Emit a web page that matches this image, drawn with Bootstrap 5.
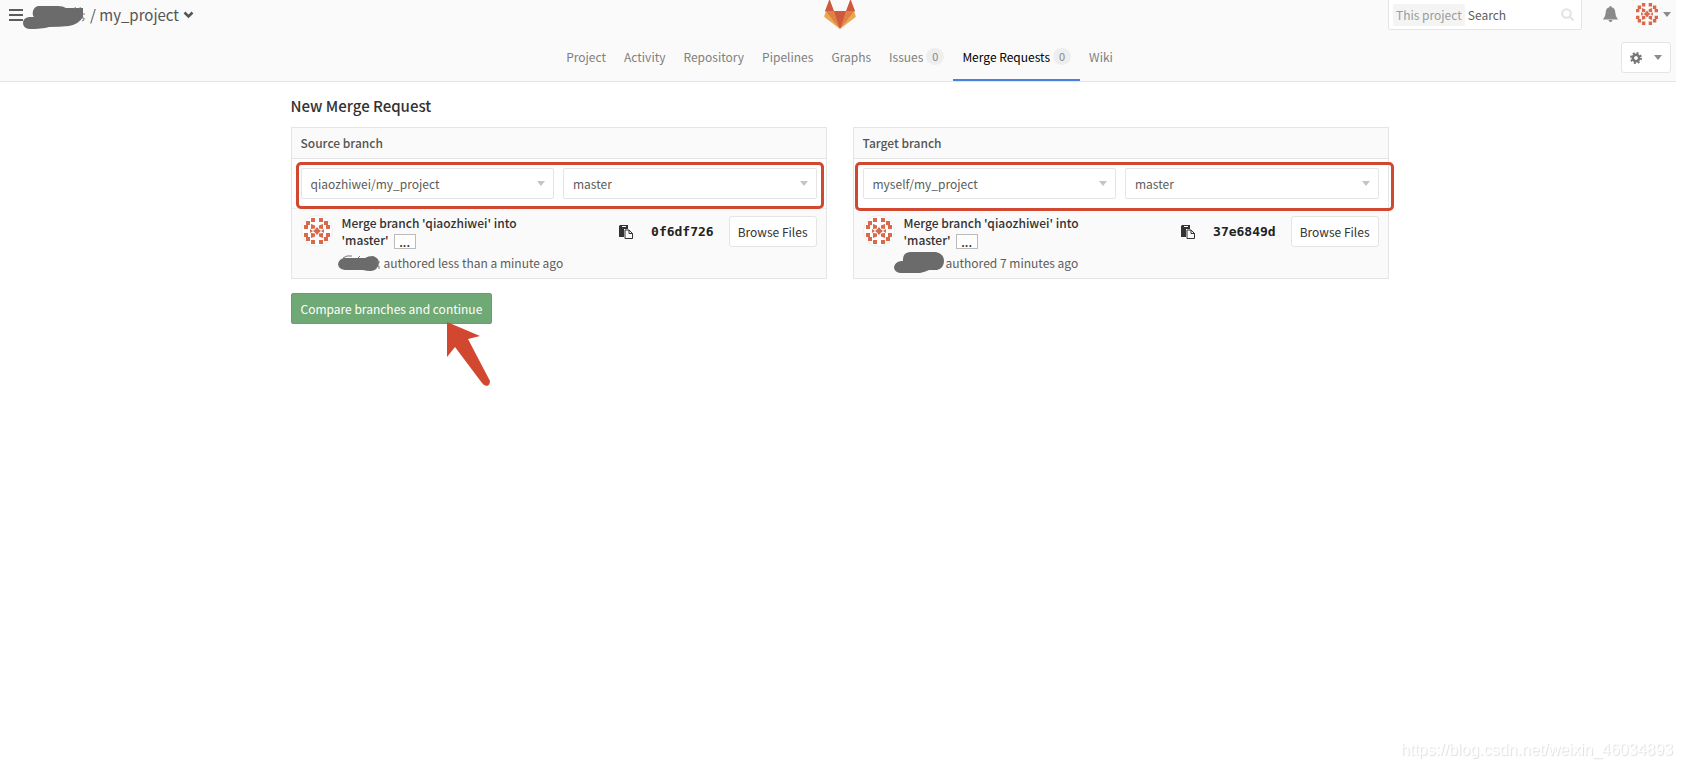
<!DOCTYPE html>
<html lang="en">
<head>
<meta charset="utf-8">
<meta name="viewport" content="width=device-width, initial-scale=1">
<title>New Merge Request · my_project</title>
<link href="https://cdn.jsdelivr.net/npm/bootstrap@5.3.0/dist/css/bootstrap.min.css" rel="stylesheet">
<style>
  body { font-family: "Noto Sans CJK SC", "Noto Sans", sans-serif; font-size: 12px; line-height: 17px; color: #5c5c5c; background: #fff; }
  a { color: inherit; text-decoration: none; }
  svg { display: block; flex: none; }
  .site-header { background: #fafafa; border-bottom: 1px solid #e5e5e5; margin-right: 6px; padding-left: 3px; }
  .top-bar { height: 34px; }
  .top-side { flex: 1 1 0; }
  .project-title { font-size: 15px; line-height: 28px; color: #555; }
  .burger { width: 14px; height: 12px; margin-left: 6px; border: 0; padding: 0; background: repeating-linear-gradient(#5c5c5c 0 2px, transparent 2px 5px); }
  .search-box { width: 194px; height: 31px; margin-top: -1px; gap: 3px; border: 1px solid #e5e5e5; background: #fff; border-radius: 0 0 2px 2px; padding-left: 4px; padding-right: 7px; }
  .search-scope { background: #f4f4f4; color: #9b9b9b; border-radius: 2px; line-height: 22px; padding: 0 3px; white-space: nowrap; }
  .search-box input { border: 0; padding: 0; min-width: 0; color: #555; outline: 0; }
  .search-box input::placeholder { color: #5c5c5c; opacity: 1; }
  .bell { margin: 6px 18px 0 21px; }
  .user { gap: 5px; margin: 3px 5px 0 0; }
  .caret { width: 0; height: 0; border: 4px solid transparent; border-top: 5px solid #8c8c8c; border-bottom: 0; }
  .caret-light { border-top-color: #c4c4c4; }
  .plain-btn { border: 0; background: none; padding: 0; }
  .sub-bar { height: 47px; }
  .tab-link { display: flex; align-items: center; gap: 3px; height: 47px; padding: 0 9px; color: #7f7f7f; border-bottom: 2px solid transparent; }
  .tab-link.current { color: #000; border-bottom-color: #4a80e0; }
  .count { background: #eee; color: #888; border-radius: 9px; width: 18px; text-align: center; font-size: 11px; }
  .box-btn { background: #fff; border: 1px solid #e5e5e5; border-radius: 3px; color: #333; height: 31px; padding: 0 8px; white-space: nowrap; }
  .settings { width: 50px; margin: 8px 5px 0 0; }
  .page-wrap { padding-right: 3px; }
  .page { max-width: 1098px; }
  .page-title { font-size: 15px; line-height: 20px; font-weight: 500; color: #333; margin: 14px 0 11px; }
  .branches { display: grid; grid-template-columns: 1fr 1fr; gap: 26px; }
  .panel { border: 1px solid #e5e5e5; background: #fff; }
  .panel-head { background: #fafafa; border-bottom: 1px solid #e5e5e5; height: 31px; padding: 0 9px; font-size: 12px; font-weight: 500; color: #555; }
  .panel-pick { padding: 9px; position: relative; display: grid; grid-template-columns: 1fr 1fr; gap: 9px; }
  .pick { background: #fff; border: 1px solid #e5e5e5; border-radius: 2px; height: 31px; padding: 0 8px 0 9px; color: #5c5c5c; }
  .outline { position: absolute; border: 3px solid #d1472f; border-radius: 5px; pointer-events: none; }
  .outline-source { inset: 3px 2px -1px 4px; }
  .outline-target { inset: 3px -6px -3px 1px; }
  .commit { background: #fafafa; border-top: 1px solid #ececec; padding: 5px 9px 4px; min-height: 70px; gap: 9px; }
  .commit-avatar { border-radius: 50%; background: #fff; border: 1px solid #eee; margin-top: 1px; }
  .commit-title { color: #333; font-weight: 500; width: 190px; margin-bottom: 5px; }
  .more-btn { border: 1px solid #bbb; background: #fff; color: #333; height: 15px; width: 22px; line-height: 10px; padding: 0; font-weight: 500; margin-left: 5px; vertical-align: middle; }
  .commit-actions { margin-top: 2px; }
  .scribble { margin: -2px 4px -2px -4px; }
  .scribble-wide { margin: -2px 2px -2px -10px; }
  .copy-btn { margin-right: 18px; }
  .sha { font: bold 13px/17px "DejaVu Sans Mono", monospace; color: #222; margin-right: 15px; }
  .action-row { position: relative; margin-top: 14px; min-height: 100px; }
  .compare-btn { background: #6fa975; border: 1px solid #65a06b; color: #fff; border-radius: 2px; height: 31px; padding: 0 9px; }
  .pointer { position: absolute; left: 156px; top: 29px; }
  .watermark { position: fixed; right: 9px; bottom: 8px; font: 16px/20px "Liberation Sans", sans-serif; color: #fff; text-shadow: 1px 1px 1px #ddd; }
</style>
</head>
<body class="min-vh-100">
<svg width="0" height="0" class="position-absolute" aria-hidden="true">
  <symbol id="identicon" viewBox="0 0 30 30">
    <g fill="#d9694a">
      <path d="M9 2h4v4H9zM17 2h4v4h-4zM9 24h4v4H9zM17 24h4v4h-4zM2 9h4v4H2zM2 17h4v4H2zM24 9h4v4h-4zM24 17h4v4h-4zM4 5h4v4H4zM22 5h4v4h-4zM4 21h4v4H4zM22 21h4v4h-4z"/>
      <path d="M15 11l2 2.500 2 1.500-2 1.500-2 2.500-2-2.500-2-1.500 2-1.500zM9 8l4 1.500v3L9 13zM21 8l-4 1.500v3l4 .5zM9 22l4-1.500v-3L9 17zM21 22l-4-1.500v-3l4-.5zM8 13l3 2-3 2zM22 13l-3 2 3 2z"/>
    </g>
  </symbol>
  <symbol id="paste" viewBox="0 0 14 14">
    <path fill="#333" d="M1 0h8v4H5v8H0V1z"/><path fill="#fafafa" d="M3 1h4v1H3z"/>
    <path fill="#fafafa" stroke="#333" d="M6 5h4l3.500 3.500v5H6z"/><path fill="none" stroke="#333" d="M10 5v3.500h3.500"/>
  </symbol>
</svg>

<header class="site-header">
  <div class="top-bar d-flex align-items-start">
    <div class="top-side d-flex align-items-center">
      <button class="burger" aria-label="Menu"></button>
      <a href="#" class="project-title d-flex align-items-center">
        <svg width="63" height="30" viewBox="23 0 63 30" aria-hidden="true"><path fill="#6b6b6b" d="M38 6h20q5 0 8 2h17v9q-4 7-14 9-10 1-20 1-7 2-20 2-6-1-6-6 0-5 6-6h5q-2-2-1-6 1-4 5-5z"/><path d="M74 9l1.500-2M79 9l1.500-2M80 14h5M80 18h4v2l-2 1" fill="none" stroke="#777"/></svg>
        <span class="ms-1">/ my_project</span>
        <svg class="ms-1" width="11" height="8" viewBox="0 0 11 8"><path d="M1.500 1.500l4 4 4-4" fill="none" stroke="#555" stroke-width="2.500"/></svg>
      </a>
    </div>
    <a href="#" aria-label="Home">
      <svg width="32" height="29" viewBox="0 1 32 29"><path fill="#cd5a3c" d="M16 30L1 12 5.500 0l4.500 12h12L26.500 0 31 12z"/><path fill="#e07f47" d="M16 30L10 12H2zM16 30l6-18h8z"/><path fill="#e9a850" d="M16 30L2 12 .3 17q-.3 1 .7 1.500zM16 30l14-18 1.700 5q.3 1-.7 1.500z"/></svg>
    </a>
    <div class="top-side d-flex align-items-start justify-content-end">
      <form class="search-box d-flex align-items-center">
        <span class="search-scope">This project</span>
        <input class="flex-fill" type="text" placeholder="Search" aria-label="Search">
        <svg width="13" height="13" viewBox="0 0 13 13" fill="none" stroke="#dfe2e8" stroke-width="2"><circle cx="5.500" cy="5.500" r="4.300"/><path d="M9 9l3.500 3.500"/></svg>
      </form>
      <button class="plain-btn bell" aria-label="Notifications"><svg width="15" height="16" viewBox="0 0 15 16" fill="#8a8a8a"><path d="M7.500 0q1 0 1 1.300Q12 2 12.200 6q.2 5 2.800 7.500H0Q2.600 11 2.800 6 3 2 6.500 1.300 6.500 0 7.500 0zM5.500 14h4q-.2 2-2 2t-2-2z"/></svg></button>
      <button class="plain-btn d-flex align-items-center user" aria-label="Account"><svg width="22" height="22" viewBox="2 2 26 26"><use href="#identicon" width="30" height="30"/></svg><span class="caret"></span></button>
    </div>
  </div>
  <div class="sub-bar d-flex">
    <div class="top-side"></div>
    <nav class="d-flex" aria-label="Project">
      <a class="tab-link" href="#">Project</a>
      <a class="tab-link" href="#">Activity</a>
      <a class="tab-link" href="#">Repository</a>
      <a class="tab-link" href="#">Pipelines</a>
      <a class="tab-link" href="#">Graphs</a>
      <a class="tab-link" href="#">Issues <span class="count">0</span></a>
      <a class="tab-link current" href="#">Merge Requests <span class="count">0</span></a>
      <a class="tab-link" href="#">Wiki</a>
    </nav>
    <div class="top-side d-flex align-items-start justify-content-end">
      <button class="box-btn d-flex align-items-center justify-content-between settings" aria-label="Settings"><svg width="12" height="12" viewBox="-6 -6 12 12"><circle r="3.200" fill="none" stroke="#777" stroke-width="2.600"/><circle r="5.100" fill="none" stroke="#777" stroke-width="1.800" stroke-dasharray="2 2.005"/></svg><span class="caret"></span></button>
    </div>
  </div>
</header>

<div class="page-wrap">
<main class="page mx-auto">
  <h1 class="page-title">New Merge Request</h1>
  <div class="branches">
    <section class="panel">
      <h2 class="panel-head d-flex align-items-center m-0">Source branch</h2>
      <div class="panel-pick">
        <button class="pick d-flex align-items-center justify-content-between">qiaozhiwei/my_project <span class="caret caret-light"></span></button>
        <button class="pick d-flex align-items-center justify-content-between">master <span class="caret caret-light"></span></button>
        <div class="outline outline-source"></div>
      </div>
      <div class="commit d-flex">
        <svg class="commit-avatar" width="32" height="32"><use href="#identicon"/></svg>
        <div class="flex-fill">
          <div class="commit-title"><a href="#">Merge branch 'qiaozhiwei' into 'master'</a><button class="more-btn" aria-label="Show more">...</button></div>
          <div class="d-flex align-items-center"><svg class="scribble" width="42" height="18" viewBox="0 0 42 18" aria-hidden="true"><path fill="#6b6b6b" d="M6 4h21q3-2 8-2 6 2 6 7-1 7-8 8-5 0-8-1H7q-7-1-7-6 1-5 6-6z"/><path d="M5 4l4-2h5M20 4l2-2M38 8h4M38 12h3v3" fill="none" stroke="#777"/></svg><span>authored less than a minute ago</span></div>
        </div>
        <div class="commit-actions d-flex align-items-center align-self-start">
          <button class="plain-btn copy-btn" aria-label="Copy commit SHA"><svg width="14" height="14"><use href="#paste"/></svg></button>
          <a href="#" class="sha">0f6df726</a>
          <button class="box-btn">Browse Files</button>
        </div>
      </div>
    </section>
    <section class="panel">
      <h2 class="panel-head d-flex align-items-center m-0">Target branch</h2>
      <div class="panel-pick">
        <button class="pick d-flex align-items-center justify-content-between">myself/my_project <span class="caret caret-light"></span></button>
        <button class="pick d-flex align-items-center justify-content-between">master <span class="caret caret-light"></span></button>
        <div class="outline outline-target"></div>
      </div>
      <div class="commit d-flex">
        <svg class="commit-avatar" width="32" height="32"><use href="#identicon"/></svg>
        <div class="flex-fill">
          <div class="commit-title"><a href="#">Merge branch 'qiaozhiwei' into 'master'</a><button class="more-btn" aria-label="Show more">...</button></div>
          <div class="d-flex align-items-center"><svg class="scribble-wide" width="50" height="21" viewBox="0 0 50 21" aria-hidden="true"><path fill="#6b6b6b" d="M16 0h26q8 2 8 9t-7 9h-8q-4 2-9 3H6q-6-1-6-6 1-5 7-6h2q-1-8 7-9z"/></svg><span>authored 7 minutes ago</span></div>
        </div>
        <div class="commit-actions d-flex align-items-center align-self-start">
          <button class="plain-btn copy-btn" aria-label="Copy commit SHA"><svg width="14" height="14"><use href="#paste"/></svg></button>
          <a href="#" class="sha">37e6849d</a>
          <button class="box-btn">Browse Files</button>
        </div>
      </div>
    </section>
  </div>
  <div class="action-row">
    <button class="compare-btn">Compare branches and continue</button>
    <svg class="pointer" width="44" height="64" viewBox="0 0 44 64" aria-hidden="true"><path fill="#d1472f" d="M0 0L33 14L21 17L43 59Q43 63 40 64Q37 64 35 61L8 25L0 35Z"/></svg>
  </div>
</main>
</div>
<div class="watermark">https://blog.csdn.net/weixin_46034893</div>
<script src="https://cdn.jsdelivr.net/npm/bootstrap@5.3.0/dist/js/bootstrap.bundle.min.js"></script>
</body>
</html>
